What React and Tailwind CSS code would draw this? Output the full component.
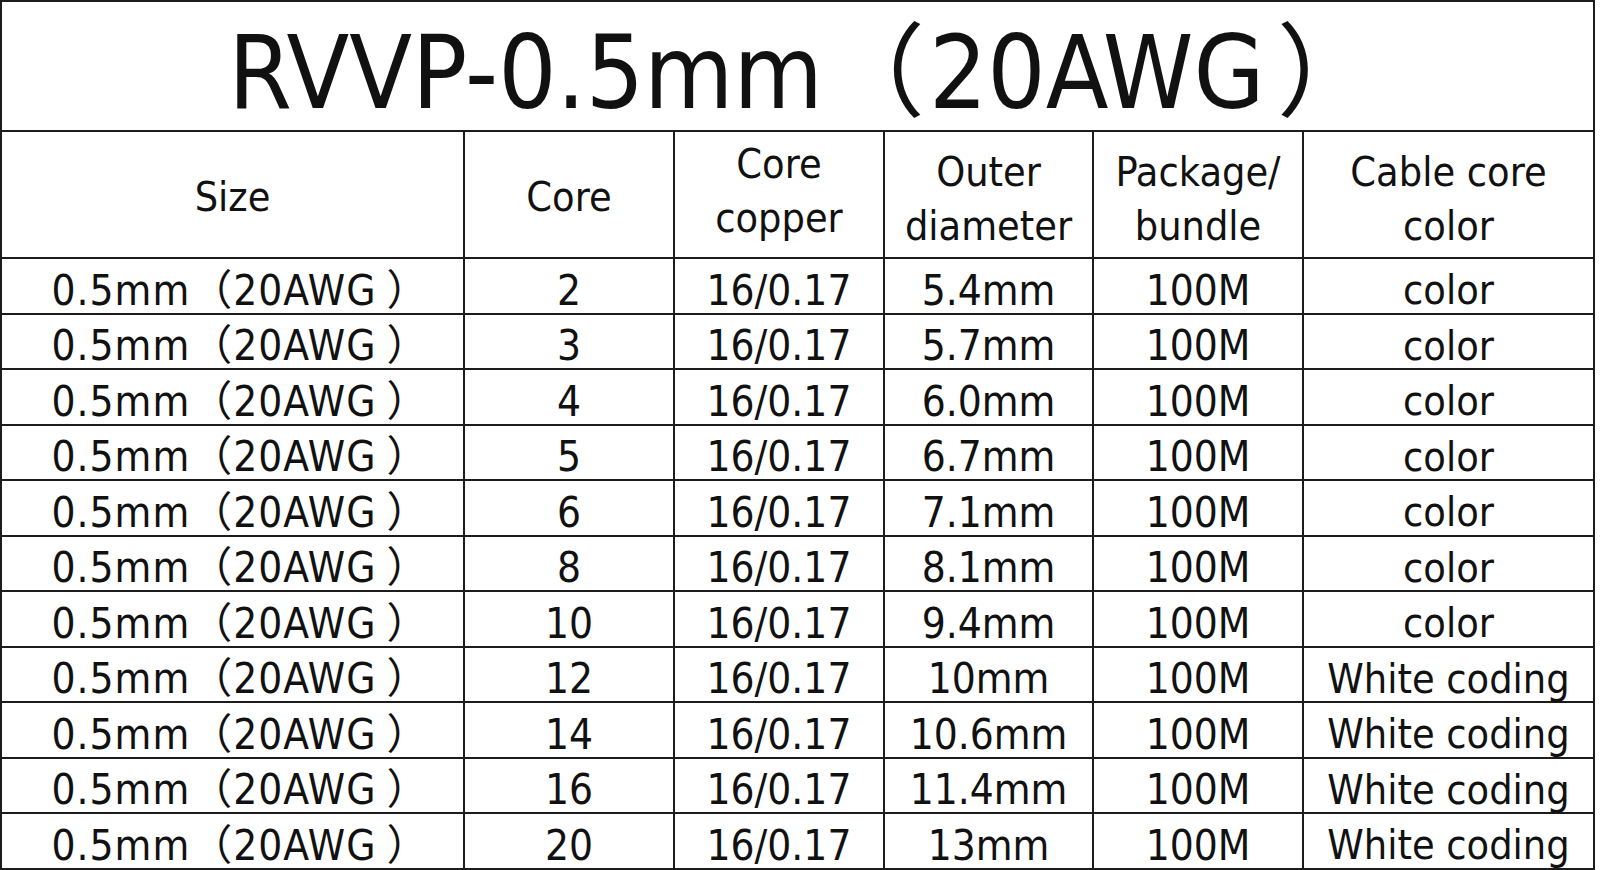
import React from "react";

const rows = [
  ["2", "5.4mm", "color"],
  ["3", "5.7mm", "color"],
  ["4", "6.0mm", "color"],
  ["5", "6.7mm", "color"],
  ["6", "7.1mm", "color"],
  ["8", "8.1mm", "color"],
  ["10", "9.4mm", "color"],
  ["12", "10mm", "White coding"],
  ["14", "10.6mm", "White coding"],
  ["16", "11.4mm", "White coding"],
  ["20", "13mm", "White coding"],
];

const font = {
  fontFamily:
    '"DejaVu Sans Condensed", "DejaVu Sans", "Noto Sans CJK SC", sans-serif',
};

function Cell({ children, last, className = "" }) {
  return (
    <div
      className={
        "flex items-center justify-center text-center border-r-2 border-[#1c1c1c] " +
        (last ? "border-b-4 " : "border-b-2 ") +
        className
      }
    >
      {children}
    </div>
  );
}

export default function App() {
  return (
    <div
      className="w-[1600px] h-[870px] overflow-hidden bg-white text-[#111]"
      style={font}
    >
      <div className="w-[1595px] grid grid-cols-[463px_210px_210px_209px_210px_291px] grid-rows-[130px_127px_repeat(10,55.5px)_57.5px] border-l-2 border-t-2 border-[#1c1c1c]">
        <div className="col-span-6 flex items-center justify-center border-r-2 border-b-2 border-[#1c1c1c] text-[102px] leading-none pt-[14px] pl-[12px] whitespace-nowrap">
          <span>
            RVVP-0.5mm<span className="mr-[4px]">（</span>20AWG<span className="ml-[12px]">）</span>
          </span>
        </div>

        <Cell className="text-[41px] leading-[54px] pt-1">Size</Cell>
        <Cell className="text-[41px] leading-[54px] pt-1">Core</Cell>
        <Cell className="text-[41px] leading-[54px] pb-2">
          <div>
            Core
            <br />
            copper
          </div>
        </Cell>
        <Cell className="text-[41px] leading-[54px] pt-2">
          <div>
            Outer
            <br />
            diameter
          </div>
        </Cell>
        <Cell className="text-[41px] leading-[54px] pt-2">
          <div>
            Package/
            <br />
            bundle
          </div>
        </Cell>
        <Cell className="text-[41px] leading-[54px] pt-2">
          <div>
            Cable core
            <br />
            color
          </div>
        </Cell>

        {rows.map((r, i) => {
          const last = i === rows.length - 1;
          const base = "text-[42px] leading-none pt-[10px] whitespace-nowrap";
          return (
            <React.Fragment key={i}>
              <Cell last={last} className={base + " pl-[16px]"}>
                <span className="tracking-[1px]">
                  0.5mm（20AWG<span className="ml-[10px]">）</span>
                </span>
              </Cell>
              <Cell last={last} className={base}>
                {r[0]}
              </Cell>
              <Cell last={last} className={base}>
                16/0.17
              </Cell>
              <Cell last={last} className={base}>
                {r[1]}
              </Cell>
              <Cell last={last} className={base}>
                100M
              </Cell>
              <Cell last={last} className="text-[41px] leading-none pt-[10px] whitespace-nowrap">
                {r[2]}
              </Cell>
            </React.Fragment>
          );
        })}
      </div>
    </div>
  );
}
